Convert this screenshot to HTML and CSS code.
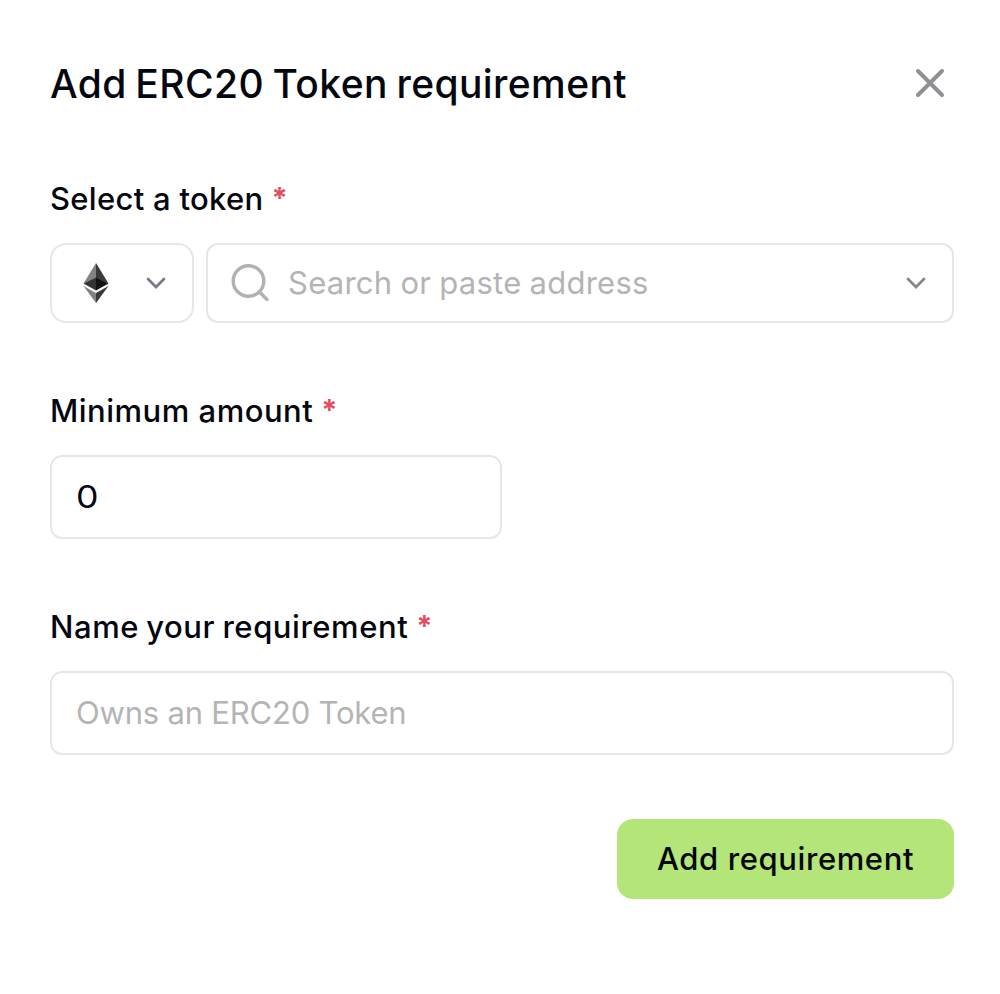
FILE: index.html
```html
<!DOCTYPE html>
<html lang="en">
<head>
<meta charset="utf-8">
<title>Add ERC20 Token requirement</title>
<link rel="stylesheet" href="styles.css">
</head>
<body>
<main class="dialog">
  <header class="header">
    <h1 class="title"><span>Add ERC20 Token requirement</span></h1>
    <button class="close" type="button" aria-label="Close">
      <svg width="32" height="32" viewBox="0 0 32 32"><path d="M4 4 28 28M28 4 4 28"/></svg>
    </button>
  </header>
  <section class="field">
    <div class="label"><span class="label-token">Select a token</span><span class="star">*</span></div>
    <div class="row">
      <div class="box chain">
        <svg class="eth" width="26" height="40" viewBox="0 0 26 40">
          <path fill="#828282" d="M13 0 0.5 20.5 13 15z"/>
          <path fill="#3a3a3a" d="M13 0v15l12.5 5.5z"/>
          <path fill="#343434" d="M13 14.5.5 20.5 13 27.5z"/>
          <path fill="#131313" d="M13 14.5v13l12.5-7z"/>
          <path fill="#828282" d="M.5 23 13 30v10z"/>
          <path fill="#3a3a3a" d="M13 30v10L25.5 23z"/>
        </svg>
        <svg class="chevron slate" width="20" height="12" viewBox="0 0 20 12"><path d="M2 2 10 10 18 2"/></svg>
      </div>
      <div class="box search">
        <svg class="lens" width="40" height="40" viewBox="0 0 40 40"><circle cx="18.5" cy="18" r="15.3"/><path d="M29.5 29 37 36.5"/></svg>
        <span class="placeholder search-text">Search or paste address</span>
        <svg class="chevron" width="20" height="12" viewBox="0 0 20 12"><path d="M2 2 10 10 18 2"/></svg>
      </div>
    </div>
  </section>
  <section class="field">
    <div class="label"><span class="label-amount">Minimum amount</span><span class="star">*</span></div>
    <div class="box input amount"><span class="value">0</span></div>
  </section>
  <section class="field">
    <div class="label"><span class="label-name">Name your requirement</span><span class="star">*</span></div>
    <div class="box input"><span class="placeholder name-text">Owns an ERC20 Token</span></div>
  </section>
  <footer class="footer"><button class="submit" type="button"><span>Add requirement</span></button></footer>
</main>
</body>
</html>
```
FILE: styles.css
```css
* { box-sizing: border-box; }
body { margin: 0; background: #fff; color: #05070f; font-family: Inter, "Liberation Sans", sans-serif; }
svg { display: block; flex: none; fill: none; stroke-linecap: round; }
.dialog { padding: 51px 46px 0 50px; }
.header { display: flex; align-items: center; justify-content: space-between; height: 64px; padding-right: 8px; margin-bottom: 64px; }
.title { margin: 0; padding-top: 1px; font-size: 39px; line-height: 64px; font-weight: 500; letter-spacing: 0.4px; word-spacing: -2.2px; white-space: nowrap; }
.close { border: 0; padding: 0; background: none; }
.close svg { stroke: #8f8f94; stroke-width: 4; }
.field { display: flex; flex-direction: column; gap: 24px; margin-bottom: 68px; }
.label { display: flex; gap: 8px; height: 40px; line-height: 40px; font-size: 31px; font-weight: 500; white-space: nowrap; }
.label-token { letter-spacing: 0.3px; }
.label-amount { letter-spacing: 0.5px; }
.label-name { letter-spacing: 0.55px; word-spacing: -1.5px; }
.star { color: #e04e60; font-size: 29px; font-weight: 700; line-height: 38px; }
.row { display: flex; gap: 12px; }
.box { display: flex; align-items: center; border: 2px solid #e6e6e6; border-radius: 12px; font-size: 31px; white-space: nowrap; }
.chain { width: 144px; height: 80px; border-radius: 16px; padding: 0 26px 0 31px; justify-content: space-between; }
.chevron { stroke: #87878c; stroke-width: 2.8; }
.slate { stroke: #777b86; }
.search { flex: 1; height: 80px; padding: 0 26px 0 22px; }
.lens { stroke: #b1b1b3; stroke-width: 3.4; }
.placeholder { color: #b4b4b6; padding-bottom: 2px; }
.search-text { flex: 1; margin-left: 18px; letter-spacing: 0.25px; word-spacing: -0.9px; }
.name-text { letter-spacing: -0.2px; }
.input { height: 84px; padding: 0 24px; }
.amount { width: 452px; }
.value { padding-bottom: 2px; transform: scaleX(1.15); transform-origin: left; }
.footer { display: flex; justify-content: flex-end; margin-top: -4px; }
.submit { width: 337px; height: 80px; border: 0; border-radius: 16px; background: #b4e578; color: #05070f; font: 500 31px Inter, "Liberation Sans", sans-serif; letter-spacing: 0.6px; padding: 0 0 2px; white-space: nowrap; }
```
